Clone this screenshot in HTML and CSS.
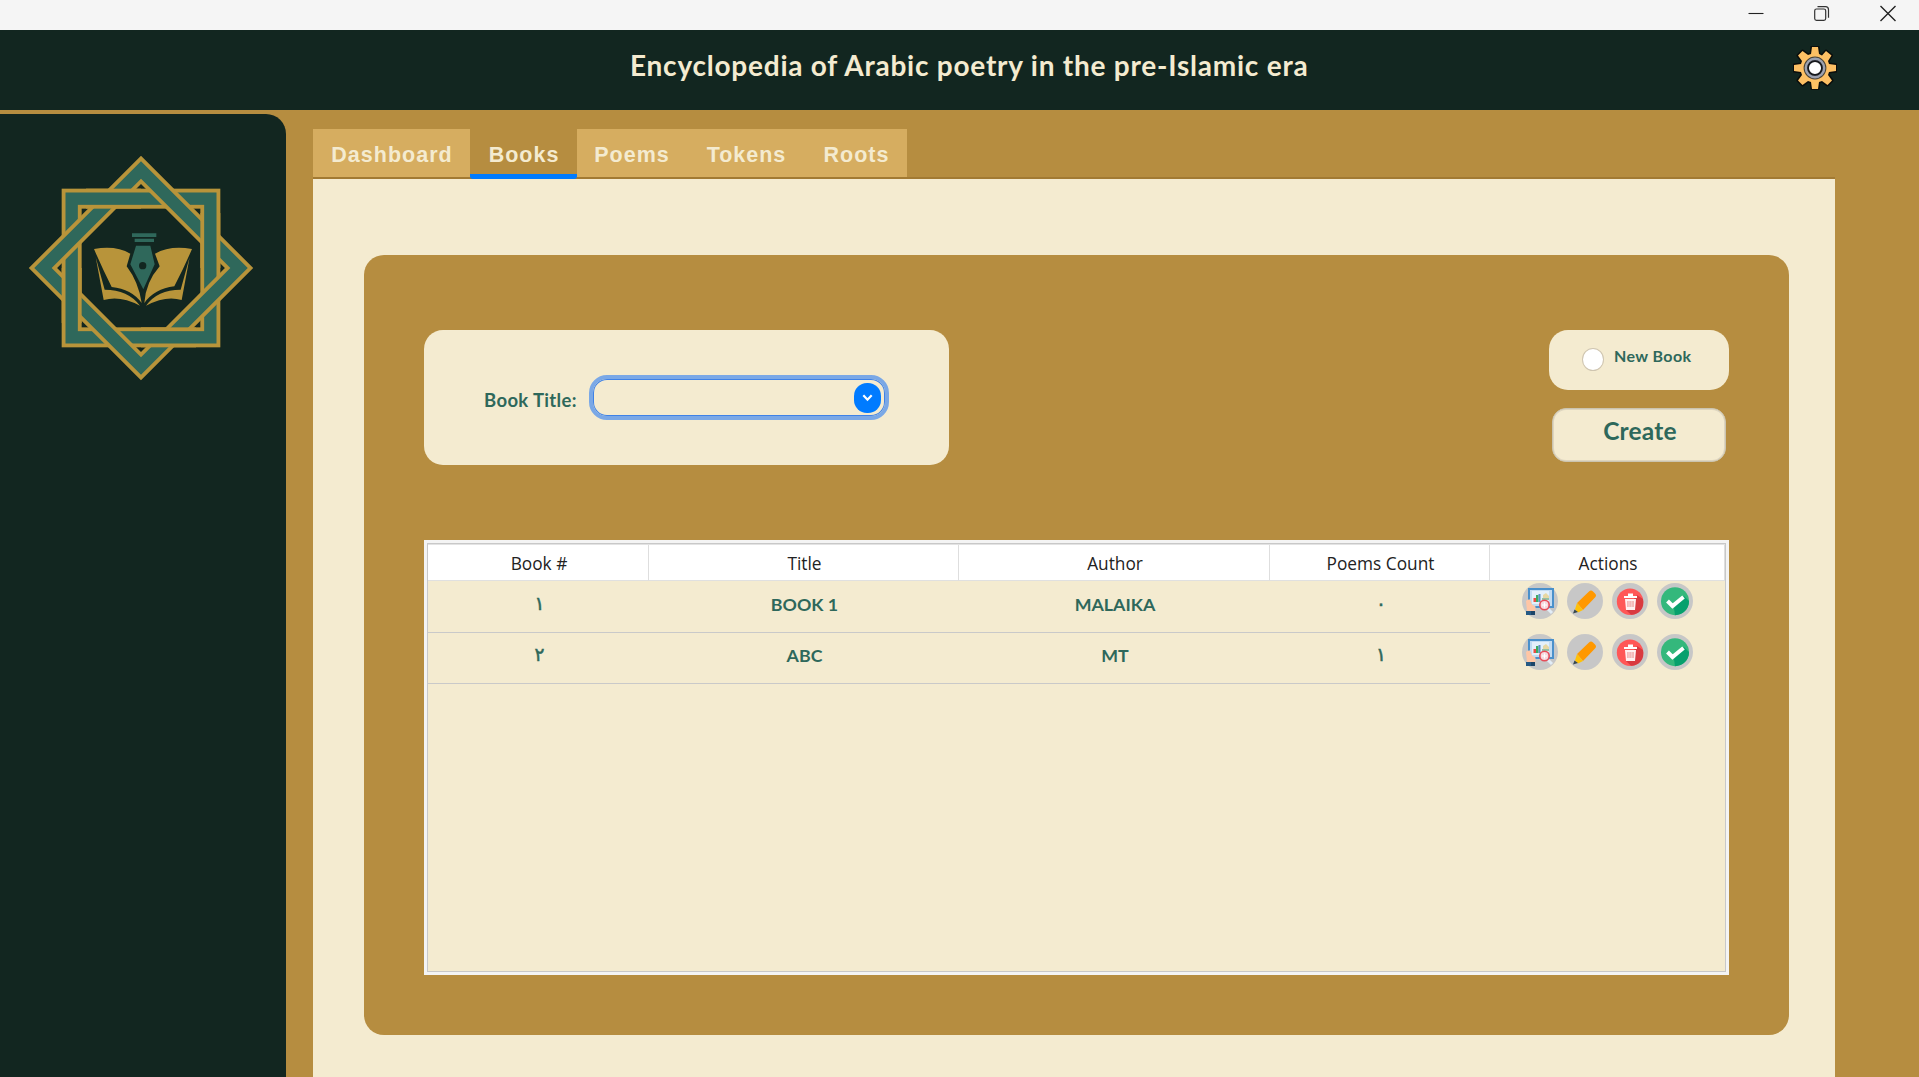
FILE: index.html
```html
<!DOCTYPE html>
<html lang="en">
<head>
<meta charset="utf-8">
<title>Encyclopedia of Arabic poetry in the pre-Islamic era</title>
<link rel="stylesheet" href="styles.css">
</head>
<body>
<svg width="0" height="0" class="defs">
  <defs>
    <clipPath id="weave">
      <rect x="-165" y="-243" width="165" height="69"/>
      <rect x="174" y="-165" width="69" height="165"/>
      <rect x="0" y="174" width="165" height="69"/>
      <rect x="-243" y="0" width="69" height="165"/>
    </clipPath>
    <g id="band" fill="none">
      <rect x="-208" y="-208" width="416" height="416" stroke="#b8943a" stroke-width="60"/>
      <rect x="-208" y="-208" width="416" height="416" stroke="#2f685b" stroke-width="37"/>
    </g>
    <symbol id="view" viewBox="0 0 36 36">
      <circle cx="18" cy="18" r="18" fill="#c7c7c7"/>
      <path d="M6 5h26v20H6z" fill="#4a90cb"/>
      <path d="M8 7h22v16H8z" fill="#c3dcf3"/>
      <path d="M10 8h17v13H10z" fill="#e4f0fb"/>
      <path d="M11.500 15h3v4h-3z" fill="#e94f43"/><path d="M14 12h2.500v7H14z" fill="#3dac61"/><path d="M16.500 11h2v8h-2z" fill="#5b93c6"/>
      <path d="M21 12l3-2 3 3v4h-6z" fill="#e7d7a3"/><path d="M20 15h7v2h-7z" fill="#95c1a4"/>
      <path d="M4 18q1-2 4-1.500l2 5 3.500 2V28H5z" fill="#ffc6a5"/>
      <path d="M4 28h9v4H4z" fill="#265a84"/><path d="M9 28h4v4H9z" fill="#1c4569"/>
      <path d="M26 26l4 4" stroke="#e2edf7" stroke-width="3"/>
      <circle cx="22.500" cy="22" r="4.700" fill="#f6d9df" stroke="#e64d59" stroke-width="1.600"/>
      <path d="M20 22h5M22.500 19.500v5" stroke="#fff" stroke-width="1"/>
    </symbol>
    <symbol id="edit" viewBox="0 0 36 36">
      <circle cx="18" cy="18" r="18" fill="#c7c7c7"/>
      <path d="M10 20L22 8.500q2-2 4 0l2 2q2 2 0 4L16 27z" fill="#ff9800"/>
      <path d="M10 20L8 26.500 11 29.500 16 27z" fill="#ffc107"/>
      <path d="M7.500 26.500L6 30.500 11 29z" fill="#37474f"/>
    </symbol>
    <symbol id="delete" viewBox="0 0 36 36">
      <circle cx="18" cy="18" r="18" fill="#c7c7c7"/>
      <circle cx="18" cy="18.700" r="13.200" fill="#ff5757"/>
      <path d="M25 12l6 4c2 9-4 16-12 15.800L14 27z" fill="#d93a40"/>
      <path d="M12 13h13v2H12zM16 10.500h5V13h-5z" fill="#fff"/>
      <path d="M13 16h11l-1 11h-9z" fill="#fff0f0"/>
      <path d="M15 18h7v6h-7z" fill="#f4b8b8"/>
      <path d="M17 18v6M19.700 18v6" stroke="#f8dada" stroke-width=".7"/>
    </symbol>
    <symbol id="confirm" viewBox="0 0 36 36">
      <circle cx="18" cy="18" r="18" fill="#c7c7c7"/>
      <circle cx="18" cy="18.200" r="14" fill="#34b87c"/>
      <path d="M27 13l5 5c0 8-6 14-14 14.200L17 25z" fill="#07a06d"/>
      <path d="M10.500 18l5 5L26.500 14" fill="none" stroke="#fff" stroke-width="4"/>
    </symbol>
  </defs>
</svg>

<div class="window">
  <div class="titlebar">
    <svg class="winctl" viewBox="0 0 30 30"><path d="M7.500 13.500h15" stroke="#222" stroke-width="1.100"/></svg>
    <svg class="winctl" viewBox="0 0 30 30" fill="none" stroke="#333" stroke-width="1.200"><rect x="7.700" y="9" width="11" height="11.300" rx="1.800"/><path d="M10.500 6.700h8q3 0 3 3v8"/></svg>
    <svg class="winctl" viewBox="0 0 30 30"><path d="M7.500 6l15 15M22.500 6l-15 15" stroke="#222" stroke-width="1.400"/></svg>
  </div>

  <header class="header">
    <h1 class="app-title">Encyclopedia of Arabic poetry in the pre-Islamic era</h1>
    <svg class="gear" viewBox="-22 -22 44 44">
      <path d="M-3-21H3L4-14 7-12.500 11-17 16.500-12.500 13-7 14-4 21-3V3L14 4 13 7 17 12.500 12.500 17 7 13 4 14 3 21H-3L-4 14-7 13-12.500 17-17 12.500-13 7-14 4-21 3V-3L-14-4-13-7-17-12.500-12.500-17-7-13-4-14Z" fill="#fdc064" stroke="#0a0d0b" stroke-width="3" stroke-linejoin="round" paint-order="stroke"/>
      <circle r="10.600" fill="#5d616b" stroke="#4b4438" stroke-width="1.600"/>
      <circle r="9.200" fill="none" stroke="#9ca1b0" stroke-width="2.400"/>
      <circle r="6.900" fill="#fff" stroke="#16181c" stroke-width="1.700"/>
    </svg>
  </header>

  <div class="body">
    <aside class="sidebar">
      <svg class="logo" viewBox="-342 -342 684 684">
        <use href="#band"/>
        <use href="#band" transform="rotate(45)"/>
        <g clip-path="url(#weave)"><use href="#band"/></g>
        <g transform="translate(-422 -533)">
          <path d="M281 476q65-12 109 14l-11 38q36 48 45 110-30-42-90-48Q304 530 281 476z" fill="#b8943a"/>
          <path d="M575 476q-65-12-111 14l14 38q-42 48-46 110 30-42 90-50 30-58 53-112z" fill="#b8943a"/>
          <path d="M286 500l27 98q70 0 106 48-60-32-109-17z" fill="#b8943a"/>
          <path d="M568 500l-27 98q-70 0-104 48 60-32 107-17z" fill="#b8943a"/>
          <path d="M395 429h73v11h-73zM403 445h58v10h-58zM407 466h43l13 56-34 75-39-75z" fill="#2f685b"/>
          <circle cx="427" cy="526" r="11" fill="#122620"/>
        </g>
      </svg>
    </aside>

    <main class="main">
      <nav class="tabs">
        <a class="tab tab-dashboard">Dashboard</a>
        <a class="tab tab-books active">Books</a>
        <a class="tab tab-poems">Poems</a>
        <a class="tab tab-tokens">Tokens</a>
        <a class="tab tab-roots">Roots</a>
      </nav>

      <section class="page">
        <div class="panel">
          <div class="tools">
            <form class="search">
              <label class="search-label">Book Title:</label>
              <div class="combo"><span class="combo-btn"><svg viewBox="0 0 10 8"><path d="M1.200 2L5 6 8.800 2" fill="none" stroke="#fff" stroke-width="2"/></svg></span></div>
            </form>
            <div class="side">
              <div class="new-book"><span class="radio"></span><span class="new-label">New Book</span></div>
              <button class="create">Create</button>
            </div>
          </div>

          <div class="table-wrap">
            <div class="table">
              <div class="row head"><div>Book #</div><div>Title</div><div>Author</div><div>Poems Count</div><div>Actions</div></div>
              <div class="row">
                <div class="num">١</div><div>BOOK 1</div><div>MALAIKA</div><div class="num">٠</div>
                <div class="actions"><svg><use href="#view"/></svg><svg><use href="#edit"/></svg><svg><use href="#delete"/></svg><svg><use href="#confirm"/></svg></div>
              </div>
              <div class="row">
                <div class="num">٢</div><div>ABC</div><div>MT</div><div class="num">١</div>
                <div class="actions"><svg><use href="#view"/></svg><svg><use href="#edit"/></svg><svg><use href="#delete"/></svg><svg><use href="#confirm"/></svg></div>
              </div>
            </div>
          </div>
        </div>
      </section>
    </main>
  </div>
</div>
</body>
</html>
```
FILE: styles.css
```css
* { box-sizing: border-box; }
body { margin: 0; overflow: hidden; }
.defs { position: absolute; }
.window {
  width: 1919px; height: 1077px; display: flex; flex-direction: column;
  background: #b68d40; font-family: Lato, "Liberation Sans", sans-serif; color: #2e685b;
}
.titlebar {
  height: 30px; flex: none; background: #f5f5f5;
  display: flex; justify-content: flex-end; gap: 36px; padding-right: 16px;
}
.winctl { width: 30px; height: 30px; }
.header {
  height: 80px; flex: none; background: #122620;
  display: flex; justify-content: space-between; align-items: flex-start;
  padding: 15px 82px 0 630px;
}
.app-title { margin: 4px 0 0; font-size: 28px; line-height: 33px; font-weight: 700; color: #f4ebd0; white-space: nowrap; letter-spacing: 0.77px; }
.gear { width: 44px; height: 44px; margin-top: 1px; }
.body { flex: 1; display: flex; gap: 27px; min-height: 0; }
.sidebar { width: 286px; margin-top: 4px; background: #122620; border-radius: 0 20px 0 0; padding: 40px 0 0 27px; }
.logo { width: 228px; height: 228px; display: block; }
.main { width: 1522px; padding-top: 19px; display: flex; flex-direction: column; }
.tabs { display: flex; height: 50px; flex: none; border-bottom: 2px solid #a27a33; }
.tab {
  height: 48px; text-align: center; background: #d6ad60; color: #f4ebd0;
  font: 700 21.500px/52px "Liberation Sans", Arial, sans-serif; letter-spacing: 1px; padding-left: 1px;
}
.tab.active { height: 50px; background: linear-gradient(#b68d40 0 0) 0 0 / 100% 45px no-repeat, #007bff; border-radius: 9px 9px 3px 3px; }
.tab-books { box-shadow: 0 0 0 0 transparent; }
.tab-dashboard { width: 157px; }
.tab-books { width: 107px; }
.tab-poems { width: 109px; }
.tab-tokens { width: 120px; }
.tab-roots { width: 101px; padding-left: 0; }
.page { flex: 1; background: #f4ebd0; padding: 76px 46px 0 51px; }
.panel { height: 780px; background: #b68d40; border-radius: 20px; padding: 75px 60px 60px; display: flex; flex-direction: column; justify-content: space-between; }
.tools { display: flex; justify-content: space-between; }
.search { width: 525px; height: 135px; margin: 0; background: #f4ebd0; border-radius: 19px; padding: 45px 60px; display: flex; justify-content: space-between; }
.search-label { font-size: 18.500px; line-height: 22px; font-weight: 700; padding-top: 14px; white-space: nowrap; letter-spacing: 0.35px; }
.combo {
  width: 300px; height: 45px; border: 4px solid #7aa8e6; border-radius: 18px;
  box-shadow: inset 0 0 0 1px #3f82e6; display: flex; justify-content: flex-end; align-items: center; padding-right: 4px;
}
.combo-btn { width: 27px; height: 30px; border-radius: 13px; background: #007bff; display: flex; align-items: center; justify-content: center; }
.combo-btn svg { width: 11px; height: 9px; }
.side { display: flex; flex-direction: column; align-items: center; gap: 18px; }
.new-book { width: 180px; height: 60px; background: #f4ebd0; border-radius: 19px; padding: 18px 0 0 33px; display: flex; align-items: flex-start; gap: 10px; }
.radio { width: 22px; height: 23px; border-radius: 50%; background: #fff; border: 1px solid #cfc5b0; flex: none; }
.new-label { font-size: 16px; line-height: 16px; font-weight: 700; white-space: nowrap; letter-spacing: 0.4px; }
.create { width: 174px; height: 54px; padding: 0 0 8px 2px; border: 1px solid #cbc4b0; box-shadow: inset 0 0 0 1px #ded5bf; border-radius: 14px; background: #f4ebd0; font: 700 24.500px/30px Lato, sans-serif; letter-spacing: 0.2px; color: #2e685b; }
.table-wrap { width: 1305px; height: 435px; background: #f4f4f4; padding: 3px; }
.table { height: 429px; border: 1px solid #c8c8c8; box-shadow: inset 0 1px #e3e3e3; background: #f4ebd0; padding-top: 1px; }
.row { display: grid; grid-template-columns: 221px 310px 311px 220px 1fr; height: 51px; text-align: center; font-size: 17.800px; line-height: 44px; font-weight: 700; }
.row > div { border-bottom: 1px solid #c9c9c9; padding-left: 1px; }
.row > div.actions { border: 0; display: flex; justify-content: center; gap: 9px; padding: 0.500px 0 0; }
.actions svg { width: 36px; height: 36px; }
.row .num { font-family: "DejaVu Sans", sans-serif; font-size: 18.500px; font-weight: 400; -webkit-text-stroke: 0.5px; line-height: 44px; padding-left: 2px; }
.row.head { height: 36px; margin-bottom: 1px; font: 400 17.300px/38px "Open Sans", "Noto Sans", sans-serif; color: #222; }
.row.head > div { height: 36px; background: #fff; border-bottom: 1px solid #e0e0e0; border-right: 1px solid #dedede; padding-left: 2px; }
```
